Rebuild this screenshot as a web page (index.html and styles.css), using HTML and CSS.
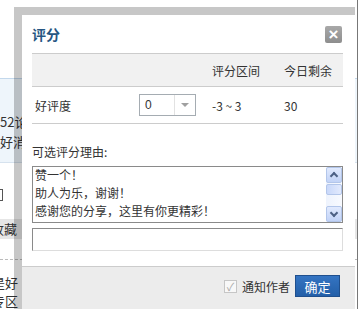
FILE: index.html
```html
<!DOCTYPE html>
<html>

<head>
    <title>评分</title>
    <meta charset="UTF-8">
    <link rel="stylesheet" href="styles.css">
</head>

<body>
    <div class="page">
        <div class="band">
            <p class="cut">52论坛</p>
            <p class="cut">好消息</p>
        </div>
        <div class="box-row"><span class="box"></span></div>
        <div class="fav">收藏</div>
        <div class="dash"></div>
        <p class="cut wide">是好</p>
        <p class="cut wide">专区</p>
    </div>

    <div class="dialog">
        <div class="dlg-inner">
            <div class="dlg-body">
                <div class="dlg-head">
                    <h3>评分</h3>
                    <span class="close">&times;</span>
                </div>

                <table class="rate">
                    <tr class="rate-head">
                        <td class="c-name"></td>
                        <td class="c-sel"></td>
                        <td class="c-range">评分区间</td>
                        <td class="c-left">今日剩余</td>
                    </tr>
                    <tr>
                        <td class="c-name">好评度</td>
                        <td class="c-sel">
                            <div class="select">
                                <span class="select-val">0</span>
                                <span class="select-btn"><i></i></span>
                            </div>
                        </td>
                        <td class="c-range">-3 ~ 3</td>
                        <td class="c-left">30</td>
                    </tr>
                </table>

                <label class="reason-label">可选评分理由:</label>
                <div class="listbox">
                    <div class="list-items">
                        <div>赞一个！</div>
                        <div>助人为乐，谢谢！</div>
                        <div>感谢您的分享，这里有你更精彩！</div>
                        <div>谢谢您的支持，这里有你更精彩！</div>
                    </div>
                    <div class="scrollbar">
                        <span class="sb-btn up"><i></i></span>
                        <span class="sb-thumb"></span>
                        <span class="sb-track"></span>
                        <span class="sb-btn down"><i></i></span>
                    </div>
                </div>
                <div class="reason-input"></div>
            </div>

            <div class="dlg-foot">
                <label class="notify">
                    <span class="check">&#10003;</span>
                    通知作者
                </label>
                <button class="ok">确定</button>
            </div>
        </div>
    </div>
</body>

</html>
```

FILE: styles.css
```css
body {
    margin: 0;
    width: 359px;
    height: 309px;
    overflow: hidden;
    position: relative;
    background: #fff;
    font-family: "Noto Sans CJK SC", "Liberation Sans", sans-serif;
    font-size: 12px;
    color: #333;
}

/* page behind the dialog */
.page {
    padding-top: 78px;
    width: 357px;
    height: 231px;
    border-right: 1px solid #777;
    background: #fff;
}

.page p {
    margin: 0;
}

.cut {
    margin-left: -2px;
    line-height: 20px;
    font-size: 13px;
    color: #333;
}

.cut.wide {
    margin-left: -8px;
    line-height: 18px;
}

.band {
    height: 44px;
    padding: 33px 0 6px;
    background: #eef5fb;
    border-top: 1px solid #c3d8ec;
    border-bottom: 1px solid #d6e2ee;
}

.box-row {
    height: 56px;
    padding-top: 26px;
    box-sizing: border-box;
}

.box {
    display: block;
    width: 10px;
    height: 10px;
    margin-left: -9px;
    border: 1px solid #555;
}

.fav {
    height: 20px;
    line-height: 20px;
    margin-left: -9px;
    background: #e6e6e6;
    font-size: 13px;
}

.dash {
    margin: 20px 0 14px;
    border-top: 1px dashed #bbb;
}

/* dialog */
.dialog {
    position: absolute;
    left: 14px;
    top: 7px;
    width: 333px;
    height: 294px;
    border-top: 8px solid rgba(0, 0, 0, 0.22);
    border-left: 8px solid rgba(0, 0, 0, 0.22);
}

.dlg-inner {
    background: #fff;
    height: 100%;
    overflow: hidden;
}

.dlg-body {
    padding: 0 12px 0 10px;
}

.dlg-head {
    height: 38px;
    border-bottom: 1px solid #ccc;
    display: flex;
    align-items: center;
    justify-content: space-between;
}

.dlg-head h3 {
    margin: 0;
    font-size: 14px;
    font-weight: bold;
    color: #265682;
}

.close {
    width: 17px;
    height: 17px;
    margin-right: 1px;
    border-radius: 2px;
    background: linear-gradient(#a8a8a8, #8e8e8e);
    color: #fff;
    font-family: "Liberation Sans", sans-serif;
    font-size: 17px;
    font-weight: bold;
    line-height: 17px;
    text-align: center;
}

.rate {
    width: 100%;
    border-collapse: collapse;
}

.rate td {
    padding: 0;
    border-bottom: 1px solid #ccc;
    height: 36px;
}

.rate-head td {
    height: 32px;
    background: #f1f1f1;
}

.c-name {
    width: 104px;
    padding-left: 3px !important;
}

.c-sel {
    width: 73px;
}

.c-range {
    width: 72px;
}

.select {
    width: 55px;
    height: 20px;
    border: 1px solid #a5acb2;
    display: flex;
    background: #fff;
}

.select-val {
    flex: 1;
    padding-left: 5px;
    line-height: 20px;
    font-family: "Liberation Sans", sans-serif;
}

.select-btn {
    width: 20px;
    border-left: 1px solid #e2e2e2;
    display: flex;
    align-items: center;
    justify-content: center;
}

.select-btn i {
    border-left: 4px solid transparent;
    border-right: 4px solid transparent;
    border-top: 4px solid #a0a0a0;
}

.reason-label {
    display: block;
    margin-top: 20px;
    margin-bottom: 6px;
    line-height: 16px;
}

.listbox {
    height: 55px;
    border: 1px solid #8a8a8a;
    display: flex;
    overflow: hidden;
}

.list-items {
    flex: 1;
    padding: 0 2px;
    line-height: 18px;
    margin-top: -1px;
}

.scrollbar {
    width: 16px;
    display: flex;
    flex-direction: column;
    background: linear-gradient(90deg, #eef3fd, #f8faff);
}

.sb-btn {
    border: 1px solid #b3c6ea;
    border-radius: 2px;
    background: linear-gradient(#e1eafe, #c2d3f7);
    display: flex;
    align-items: center;
    justify-content: center;
    box-sizing: border-box;
    height: 16px;
}

.sb-btn i {
    width: 4px;
    height: 4px;
    border-left: 2px solid #4d6185;
    border-top: 2px solid #4d6185;
    transform: translateY(1px) rotate(45deg);
}

.sb-btn.down i {
    transform: translateY(-1px) rotate(225deg);
}

.sb-thumb {
    height: 9px;
    margin-top: 1px;
    border: 1px solid #b3c6ea;
    border-radius: 2px;
    background: linear-gradient(90deg, #c9d8fa, #e2eafd);
}

.sb-track {
    flex: 1;
}

.reason-input {
    margin-top: 5px;
    height: 21px;
    border: 1px solid #ddd;
    border-top-color: #8a8a8a;
    border-left-color: #8a8a8a;
}

.dlg-foot {
    margin-top: 15px;
    border-top: 1px solid #ccc;
    background: #ececec;
    height: 60px;
    padding: 8px 15px 0 0;
    display: flex;
    align-items: flex-start;
    justify-content: flex-end;
}

.notify {
    display: flex;
    align-items: center;
    height: 22px;
    margin-right: 5px;
    font-size: 12px;
    color: #333;
}

.check {
    width: 11px;
    height: 11px;
    margin-right: 5px;
    border: 1px solid #c6c6c6;
    background: #f8f8f8;
    color: #aaa;
    font-size: 11px;
    line-height: 11px;
    text-align: center;
}

.ok {
    width: 45px;
    height: 22px;
    padding: 0;
    border: 1px solid #1f4f8d;
    background: linear-gradient(#3474c2, #235fa8);
    color: #fff;
    font-family: "Noto Sans CJK SC", sans-serif;
    font-size: 13px;
}
```
